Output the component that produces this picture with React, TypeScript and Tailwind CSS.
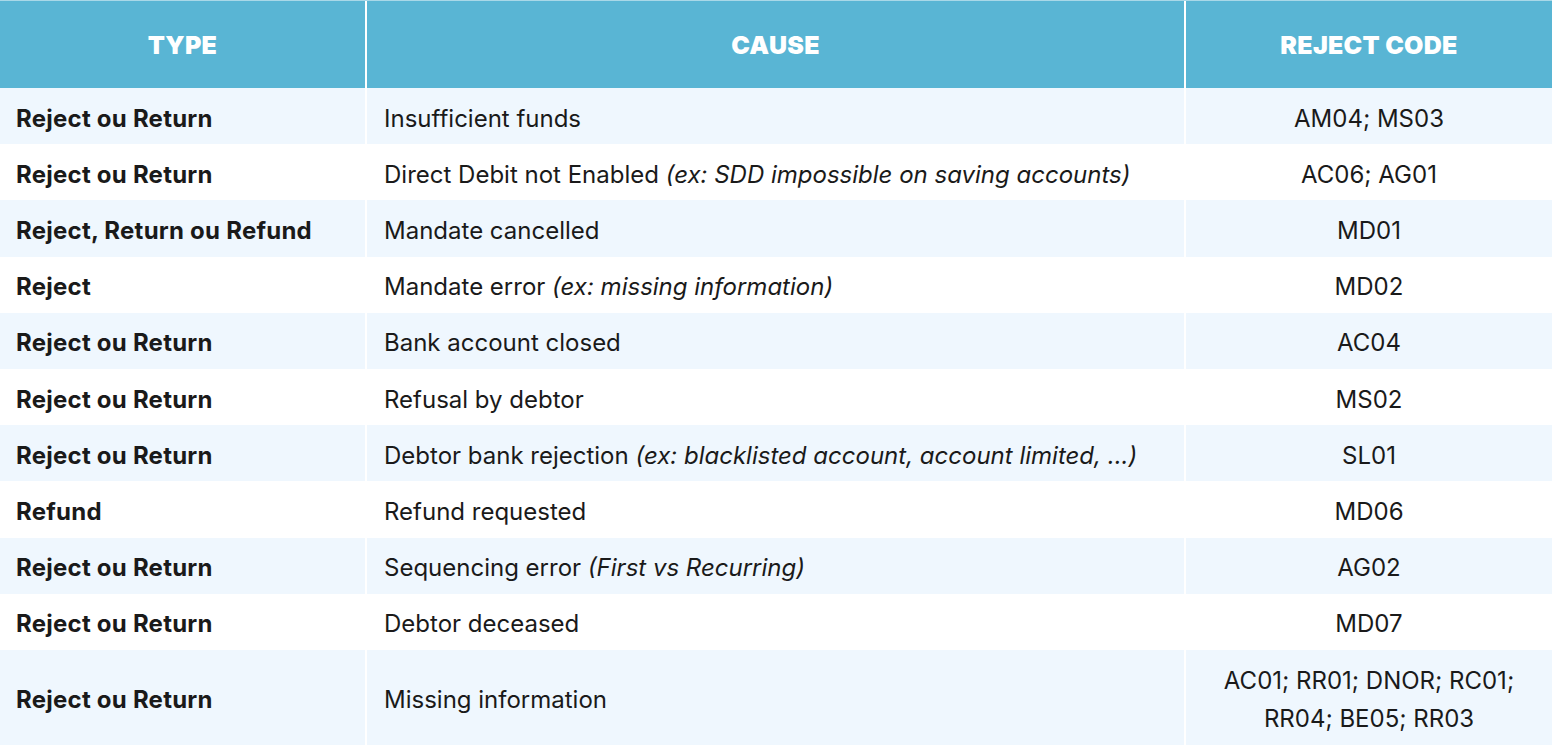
const rows: { type: string; cause: string; note?: string; code: string[] }[] = [
  { type: "Reject ou Return", cause: "Insufficient funds", code: ["AM04; MS03"] },
  { type: "Reject ou Return", cause: "Direct Debit not Enabled", note: "(ex: SDD impossible on saving accounts)", code: ["AC06; AG01"] },
  { type: "Reject, Return ou Refund", cause: "Mandate cancelled", code: ["MD01"] },
  { type: "Reject", cause: "Mandate error", note: "(ex: missing information)", code: ["MD02"] },
  { type: "Reject ou Return", cause: "Bank account closed", code: ["AC04"] },
  { type: "Reject ou Return", cause: "Refusal by debtor", code: ["MS02"] },
  { type: "Reject ou Return", cause: "Debtor bank rejection", note: "(ex: blacklisted account, account limited, ...)", code: ["SL01"] },
  { type: "Refund", cause: "Refund requested", code: ["MD06"] },
  { type: "Reject ou Return", cause: "Sequencing error", note: "(First vs Recurring)", code: ["AG02"] },
  { type: "Reject ou Return", cause: "Debtor deceased", code: ["MD07"] },
  { type: "Reject ou Return", cause: "Missing information", code: ["AC01; RR01; DNOR; RC01;", "RR04; BE05; RR03"] },
];

export default function App() {
  return (
    <div className="h-[750px] w-[1552px] bg-white font-['Inter',sans-serif] text-[24px] text-[#1a1a1a]">
      <div className="grid grid-cols-[365px_817px_366px] gap-x-[2px] border-t border-[#a9d8e8]">
        <div className="flex h-[87px] items-center justify-center bg-[#59b5d4] pt-[3px] text-[25px] font-black uppercase tracking-[0.01em] text-white">
          Type
        </div>
        <div className="flex h-[87px] items-center justify-center bg-[#59b5d4] pt-[3px] text-[25px] font-black uppercase tracking-[0.01em] text-white">
          Cause
        </div>
        <div className="flex h-[87px] items-center justify-center bg-[#59b5d4] pt-[3px] text-[25px] font-black uppercase tracking-[0.01em] text-white">
          Reject Code
        </div>
        {rows.map((r, i) => {
          const bg = i % 2 === 0 ? "bg-[#eff7fe]" : "bg-white";
          const h = i === rows.length - 1 ? "h-[95px]" : "h-[56.2px]";
          return (
            <div key={i} className="contents">
              <div className={`flex ${h} ${bg} items-center pl-4 pt-[5px] font-bold tracking-[0.01em]`}>{r.type}</div>
              <div className={`flex ${h} ${bg} items-center pl-[17px] pt-[5px]`}>
                <span>
                  {r.cause}
                  {r.note && <em> {r.note}</em>}
                </span>
              </div>
              <div className={`flex ${h} ${bg} flex-col items-center justify-center pt-[5px] leading-[38px]`}>
                {r.code.map((c) => (
                  <span key={c}>{c}</span>
                ))}
              </div>
            </div>
          );
        })}
      </div>
    </div>
  );
}
